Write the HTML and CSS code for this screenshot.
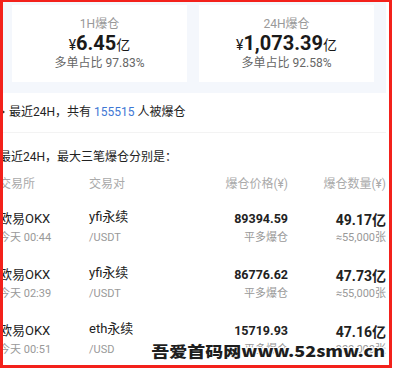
FILE: index.html
```html
<!DOCTYPE html>
<html>
<head>
  <meta charset="UTF-8" />
  <title>爆仓统计</title>
  <link rel="stylesheet" href="styles.css">
</head>
<body>
  <div class="page">
    <div class="summary">
      <div class="card">
        <div class="card-label">1H爆仓</div>
        <div class="card-value"><span class="unit">¥</span>6.45<span class="unit">亿</span></div>
        <div class="card-sub">多单占比 97.83%</div>
      </div>
      <div class="card">
        <div class="card-label">24H爆仓</div>
        <div class="card-value"><span class="unit">¥</span>1,073.39<span class="unit">亿</span></div>
        <div class="card-sub">多单占比 92.58%</div>
      </div>
    </div>

    <div class="intro"><span class="bullet"></span>最近24H，共有 <span class="count">155515</span> 人被爆仓</div>

    <div class="section">
      <div class="section-title">最近24H，最大三笔爆仓分别是：</div>
      <div class="row head">
        <div>交易所</div>
        <div>交易对</div>
        <div class="num">爆仓价格(¥)</div>
        <div class="num">爆仓数量(¥)</div>
      </div>
      <div class="row">
        <div><div class="main">欧易OKX</div><div class="sub">今天 00:44</div></div>
        <div><div class="main pair">yfi永续</div><div class="sub">/USDT</div></div>
        <div class="num"><div class="main strong">89394.59</div><div class="sub">平多爆仓</div></div>
        <div class="num"><div class="main strong amount">49.17亿</div><div class="sub">≈55,000张</div></div>
      </div>
      <div class="row">
        <div><div class="main">欧易OKX</div><div class="sub">今天 02:39</div></div>
        <div><div class="main pair">yfi永续</div><div class="sub">/USDT</div></div>
        <div class="num"><div class="main strong">86776.62</div><div class="sub">平多爆仓</div></div>
        <div class="num"><div class="main strong amount">47.73亿</div><div class="sub">≈55,000张</div></div>
      </div>
      <div class="row">
        <div><div class="main">欧易OKX</div><div class="sub">今天 00:51</div></div>
        <div><div class="main pair">eth永续</div><div class="sub">/USD</div></div>
        <div class="num"><div class="main strong">15719.93</div><div class="sub">平多爆仓</div></div>
        <div class="num"><div class="main strong amount">47.16亿</div><div class="sub">≈900,000张</div></div>
      </div>
    </div>
  </div>

  <div class="watermark">吾爱首码网www.52smw.cn</div>
  <div class="frame"></div>
</body>
</html>
```

FILE: styles.css
```css
body {
  margin: 0;
  width: 394px;
  height: 368px;
  overflow: hidden;
  position: relative;
  background: #fff;
  font-family: "Roboto", "Noto Sans CJK SC", sans-serif;
  color: #222;
}

.page {
  width: 386px;
}

.summary {
  display: flex;
  gap: 12px;
  padding: 5px 12px 11px;
  background-color: #f4f7fc;
}

.card {
  flex: 1;
  background-color: #fff;
  padding: 12px 0 11px;
  text-align: center;
}

.card-label {
  font-size: 12px;
  line-height: 15px;
  color: #999;
}

.card-value {
  font-size: 20px;
  line-height: 22px;
  font-weight: bold;
  color: #1a1a1a;
}

.card-value .unit {
  font-size: 14px;
  font-weight: normal;
}

.card-sub {
  font-size: 12px;
  line-height: 15px;
  color: #666;
}

.intro {
  margin-top: 9px;
  padding-left: 9px;
  font-size: 12px;
  line-height: 20px;
  position: relative;
  padding-bottom: 10px;
  border-bottom: 1px solid #f3f3f3;
}

.bullet {
  position: absolute;
  left: 1px;
  top: 7px;
  width: 0;
  height: 0;
  border-top: 3px solid transparent;
  border-bottom: 3px solid transparent;
  border-left: 4px solid #333;
}

.count {
  color: #3e77d4;
}

.section {
  margin-left: -1px;
}

.section-title {
  margin-top: 14px;
  font-size: 12px;
  line-height: 20px;
}

.row {
  display: grid;
  grid-template-columns: 90px 89px 110px 98px;
  padding: 17px 0 2px;
}

.row.head {
  padding: 8px 0 0;
  font-size: 12px;
  line-height: 18px;
  color: #aaa;
}

.num {
  text-align: right;
}

.main {
  font-size: 13px;
  line-height: 18px;
  margin-bottom: 1px;
}

.main.pair {
  margin-top: -2px;
  margin-bottom: 3px;
}

.main.strong {
  font-weight: bold;
  font-size: 12.5px;
}

.main.amount {
  font-size: 14px;
  margin-top: 1px;
  margin-bottom: 0;
}

.sub {
  font-size: 11px;
  line-height: 18px;
  color: #999;
}

.watermark {
  position: absolute;
  right: 9px;
  bottom: 9px;
  font-family: "Noto Sans CJK SC", sans-serif;
  font-size: 18px;
  line-height: 20px;
  font-weight: 900;
  color: #1e1e1e;
  transform: scaleY(0.85);
  transform-origin: bottom;
  text-shadow: -1px -1px 0 #fff, 1px -1px 0 #fff, -1px 1px 0 #fff, 1px 1px 0 #fff;
}

.frame {
  position: absolute;
  top: 0;
  left: 0;
  width: 392px;
  height: 368px;
  box-sizing: border-box;
  border: 3px solid #f3211b;
  border-top-width: 2px;
}
```
